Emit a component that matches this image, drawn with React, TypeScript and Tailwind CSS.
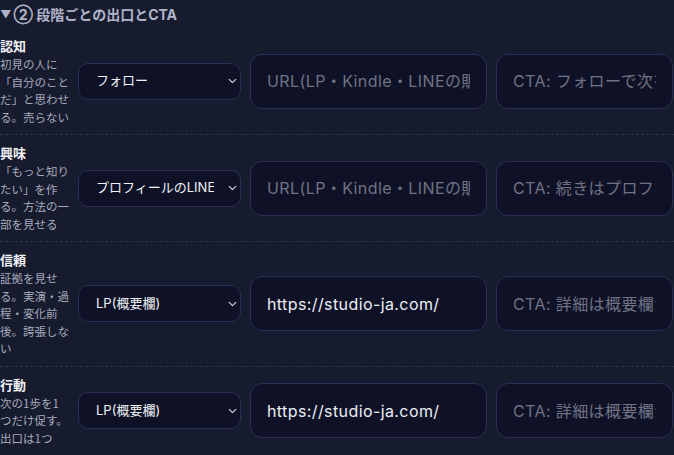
import type { FC } from 'react'

type Stage = {
  title: string
  desc: string
  exit: string
  url: string
  cta: string
}

const stages: Stage[] = [
  {
    title: '認知',
    desc: '初見の人に「自分のことだ」と思わせる。売らない',
    exit: 'フォロー',
    url: '',
    cta: 'CTA: フォローで次を見逃さない',
  },
  {
    title: '興味',
    desc: '「もっと知りたい」を作る。方法の一部を見せる',
    exit: 'プロフィールのLINE',
    url: '',
    cta: 'CTA: 続きはプロフィールのLINEで',
  },
  {
    title: '信頼',
    desc: '証拠を見せる。実演・過程・変化前後。誇張しない',
    exit: 'LP(概要欄)',
    url: 'https://studio-ja.com/',
    cta: 'CTA: 詳細は概要欄から',
  },
  {
    title: '行動',
    desc: '次の1歩を1つだけ促す。出口は1つ',
    exit: 'LP(概要欄)',
    url: 'https://studio-ja.com/',
    cta: 'CTA: 詳細は概要欄から',
  },
]

const exitOptions = ['フォロー', 'プロフィールのLINE', 'LP(概要欄)', 'Kindle', 'DM']

const Chevron: FC = () => (
  <svg
    viewBox="0 0 10 6"
    className="pointer-events-none absolute right-[4px] top-1/2 h-[5px] w-[9px] -translate-y-1/2 text-[#d8dbe6]"
    fill="none"
    stroke="currentColor"
    strokeWidth="1.3"
    strokeLinecap="round"
    strokeLinejoin="round"
  >
    <path d="M1 1l4 4 4-4" />
  </svg>
)

const StageRow: FC<{ stage: Stage }> = ({ stage }) => (
  <div className="flex items-center border-b border-dashed border-[#2d3250] py-[8px]">
    <div className="w-[69.5px] shrink-0" style={{ fontFamily: '"Noto Sans CJK JP", sans-serif' }}>
      <div className="text-[13px] font-bold leading-[20px] text-[#f1f2f7]">{stage.title}</div>
      <p className="text-[11.5px] leading-[17.5px] text-[#a7abbd]">{stage.desc}</p>
    </div>
    <div className="relative ml-[8.5px] w-[163px] shrink-0">
      <select
        defaultValue={stage.exit}
        className="h-[37px] w-full appearance-none rounded-[10px] border border-[#2a2f55] bg-[#0f1226] pl-[17px] pr-[26px] text-[13px] text-[#f1f2f7] outline-none"
      >
        {exitOptions.map((o) => (
          <option key={o} value={o}>
            {o}
          </option>
        ))}
      </select>
      <Chevron />
    </div>
    <input
      defaultValue={stage.url}
      placeholder="URL(LP・Kindle・LINEの販売ページなど)"
      className="ml-[9px] h-[55px] w-[237px] shrink-0 rounded-[12px] border border-[#2a2f55] bg-[#0f1226] px-[16px] text-[16px] tracking-[0.4px] text-[#eceef5] outline-none placeholder:text-[#6f7385]"
    />
    <input
      defaultValue=""
      placeholder={stage.cta}
      className="ml-[9px] h-[55px] w-[177px] shrink-0 rounded-[12px] border border-[#2a2f55] bg-[#0f1226] px-[16px] text-[16px] tracking-[0.4px] text-[#eceef5] outline-none placeholder:text-[#6f7385]"
    />
  </div>
)

const App: FC = () => (
  <div
    className="min-h-screen w-full overflow-hidden bg-[#171b2e]"
    style={{ fontFamily: 'Inter, "Noto Sans CJK JP", sans-serif' }}
  >
    <div className="flex h-[28px] items-center text-[14px] font-bold text-[#b0b4c9]">
      <span className="mr-[2px] text-[11px]">▼</span>
      <span>② 段階ごとの出口とCTA</span>
    </div>
    {stages.map((s) => (
      <StageRow key={s.title} stage={s} />
    ))}
  </div>
)

export default App
